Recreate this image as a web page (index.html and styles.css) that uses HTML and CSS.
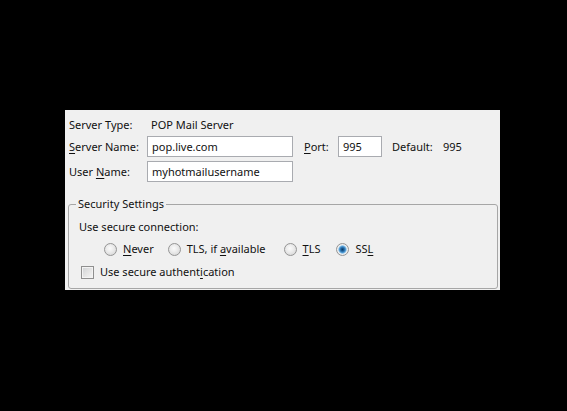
FILE: index.html
```html
<!DOCTYPE html>
<html>
<head>
<meta charset="utf-8">
<link rel="stylesheet" href="styles.css">
</head>
<body>
<div class="panel">
  <div class="row r1">
    <span class="lbl">Server Type:</span>
    <span class="val">POP Mail Server</span>
  </div>
  <div class="row r2">
    <label class="lbl"><u>S</u>erver Name:</label>
    <input class="txt name" value="pop.live.com">
    <label class="port-lbl"><u>P</u>ort:</label>
    <input class="txt port" value="995">
    <span class="def-lbl">Default:</span>
    <span>995</span>
  </div>
  <div class="row r3">
    <label class="lbl">User <u>N</u>ame:</label>
    <input class="txt name" value="myhotmailusername">
  </div>
  <fieldset class="group">
    <legend>Security Settings</legend>
    <div class="conn">Use secure connection:</div>
    <div class="radios">
      <label class="opt o1"><input type="radio" name="sec"><span><u>N</u>ever</span></label>
      <label class="opt o2"><input type="radio" name="sec"><span>TLS, if <u>a</u>vailable</span></label>
      <label class="opt o3"><input type="radio" name="sec"><span><u>T</u>LS</span></label>
      <label class="opt o4"><input type="radio" name="sec" checked><span>SS<u>L</u></span></label>
    </div>
    <label class="chk"><input type="checkbox"><span>Use secure authent<u>i</u>cation</span></label>
  </fieldset>
</div>
</body>
</html>
```
FILE: styles.css
```css
* { box-sizing: border-box; }
html, body { margin: 0; background: #000; }
body {
  width: 567px;
  height: 411px;
  overflow: hidden;
  font-family: "Noto Sans", "Open Sans", sans-serif;
  font-size: 11px;
  line-height: 16px;
  color: #111;
}
u { text-decoration: underline; text-underline-offset: 2px; text-decoration-thickness: 1px; }
.panel {
  margin: 110px 0 0 65px;
  width: 435px;
  height: 180px;
  background: #f0f0f0;
  padding: 4px 0 0 4px;
  display: flex;
  flex-direction: column;
}
.row { display: flex; align-items: center; height: 21px; }
.r2 { margin-top: 1px; }
.r3 { margin-top: 4px; }
.lbl { width: 78px; }
.val { padding-left: 4px; }
.txt {
  height: 21px;
  margin: 0;
  border: 1px solid #a9abb0;
  background: #fff;
  padding: 0 0 0 4px;
  font: inherit;
  color: #111;
  outline: none;
}
.name { width: 146px; }
.port-lbl { margin-left: 11px; width: 34px; }
.port { width: 44px; }
.def-lbl { margin-left: 10px; width: 51px; }
.group {
  margin: 14px 0 0 -1px;
  width: 430px;
  height: 93px;
  border: 1px solid #a6a6a6;
  border-radius: 3px;
  padding: 0 0 0 7px;
  min-width: 0;
}
.group legend { padding: 0 2px; line-height: 16px; }
.conn { margin: 7px 0 0 3px; }
.radios { display: flex; align-items: center; margin: 6px 0 0 28px; height: 16px; }
.opt { display: flex; align-items: center; gap: 6px; }
.o2 { margin-left: 14px; }
.o3 { margin-left: 18px; }
.o4 { margin-left: 16px; }
.opt input {
  appearance: none;
  -webkit-appearance: none;
  width: 13px;
  height: 13px;
  margin: 0;
  border-radius: 50%;
  border: 1px solid #959595;
  background: radial-gradient(circle at 45% 40%, #fbfbfb 0, #ececec 40%, #cfcfcf 100%);
}
.opt input:checked {
  background: radial-gradient(circle at 50% 50%, #0a3a66 0, #1d5e97 1.5px, #4b95cf 3px, #8cc3ea 3.8px, #f2f2f2 4.6px, #d6d6d6 100%);
}
.chk { display: flex; align-items: center; gap: 6px; margin: 7px 0 0 5px; height: 16px; }
.chk input {
  appearance: none;
  -webkit-appearance: none;
  width: 13px;
  height: 13px;
  margin: 0;
  border: 1px solid #8f8f8f;
  background: linear-gradient(135deg, #cfd1d4 0, #e4e4e4 50%, #f6f6f6 100%);
  box-shadow: inset 0 0 0 1px #f3f3f3;
}
```
